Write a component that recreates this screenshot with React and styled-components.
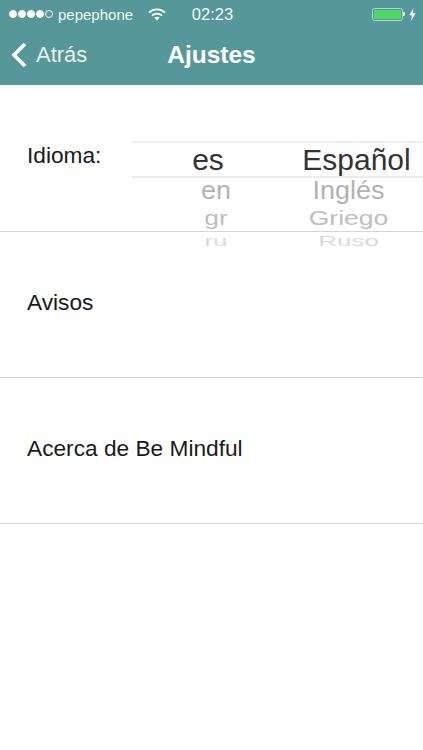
import React from 'react';
import styled, {createGlobalStyle} from 'styled-components';

const GlobalStyle = createGlobalStyle`
  html, body {
    margin: 0;
    padding: 0;
    background: #fff;
    font-family: "Liberation Sans", Arial, sans-serif;
  }
`

const Screen = styled.div`
  width: 423px;
  height: 750px;
  overflow: hidden;
  background: #fff;
`

const Header = styled.header`
  height: 85px;
  background: #569899;
  color: #fff;
  display: flex;
  flex-direction: column;
`

const StatusBar = styled.div`
  height: 28px;
  padding: 0 7px 0 9px;
  display: flex;
  align-items: center;
  font-size: 15px;
  color: #eef5f5;
`

const StatusLeft = styled.div`
  flex: 1;
  display: flex;
  align-items: center;
`

const Signal = styled.span`
  width: 8px;
  height: 8px;
  margin-right: 1px;
  border-radius: 50%;
  box-sizing: border-box;
  border: 1px solid #fff;
  background: ${p => (p.$on ? '#fff' : 'transparent')};
`

const Carrier = styled.span`
  margin-left: 4px;
  margin-right: 15px;
`

const Clock = styled.div`
  width: 60px;
  text-align: center;
  font-size: 16.5px;
`

const StatusRight = styled.div`
  flex: 1;
  display: flex;
  align-items: center;
  justify-content: flex-end;
  gap: 4px;
`

const Battery = styled.div`
  width: 31px;
  height: 13px;
  box-sizing: border-box;
  padding: 1px;
  border: 1px solid #b7d2d2;
  border-radius: 2.5px;
  display: flex;
`

const BatteryFill = styled.div`
  flex: 1;
  border-radius: 1px;
  background: #4cd964;
`

const BatteryCap = styled.div`
  width: 2px;
  height: 4px;
  margin-left: -4px;
  background: #d8e8e8;
  border-radius: 0 1px 1px 0;
`

const NavBar = styled.nav`
  flex: 1;
  padding-bottom: 4px;
  display: grid;
  grid-template-columns: 1fr auto 1fr;
  align-items: center;
`

const Back = styled.div`
  padding-left: 11px;
  display: flex;
  align-items: center;
  gap: 9px;
  font-size: 22px;
  color: #e6f0f0;
`

const Title = styled.h1`
  margin: 0;
  font-size: 24.5px;
  font-weight: 700;
`

const Settings = styled.main`
  padding-top: 1px;
`

const SettingRow = styled.section`
  height: 146px;
  position: relative;
  box-sizing: border-box;
  padding-left: 27px;
  display: flex;
  align-items: ${p => (p.$top ? 'flex-start' : 'center')};
  padding-top: ${p => (p.$top ? '56px' : '0')};
  padding-bottom: ${p => (p.$top ? '0' : '5px')};
  border-bottom: 1px solid #d6d6d6;
  font-size: 22.7px;
  line-height: 26px;
  color: #1a1a1a;
`

const Picker = styled.div`
  position: absolute;
  top: 54px;
  left: 132px;
  right: 0;
`

const PickerRow = styled.div`
  height: ${p => p.$height}px;
  display: grid;
  grid-template-columns: 152px 1fr;
  grid-template-rows: 100%;
  align-items: center;
  box-sizing: border-box;
  color: ${p => p.$color};
  font-size: ${p => p.$size}px;
  line-height: 1;
  white-space: nowrap;
  ${p => p.$selected && 'border-top: 2px solid #ececec; border-bottom: 2px solid #ececec; margin-top: 1px;'}
`

const Cell = styled.span`
  text-align: center;
  transform: translateX(${p => p.$shift}px) scaleY(${p => p.$squash});
`

const rows = [
    {code: 'en', name: 'Inglés', size: 27, height: 25, color: '#b2b2b2', squash: 0.95},
    {code: 'gr', name: 'Griego', size: 26.5, height: 31, color: '#bebebe', squash: 0.78},
    {code: 'ru', name: 'Ruso', size: 26, height: 14, color: '#dcdcdc', squash: 0.55},
]

const App = () => {
    return (
        <Screen>
            <GlobalStyle/>
            <Header>
                <StatusBar>
                    <StatusLeft>
                        <Signal $on/><Signal $on/><Signal $on/><Signal $on/><Signal/>
                        <Carrier>pepephone</Carrier>
                        <svg width="18" height="13" viewBox="0 0 18 13">
                            <path d="M1 4.6C5.6.4 12.4.4 17 4.6" fill="none" stroke="#fff" strokeWidth="1.7"/>
                            <path d="M4 7.6c2.9-2.6 7.1-2.6 10 0" fill="none" stroke="#fff" strokeWidth="1.7"/>
                            <path d="M6.3 9.6c1.6-1.3 3.8-1.3 5.4 0L9 12.6z" fill="#fff"/>
                        </svg>
                    </StatusLeft>
                    <Clock>02:23</Clock>
                    <StatusRight>
                        <Battery><BatteryFill/></Battery>
                        <BatteryCap/>
                        <svg width="7" height="13" viewBox="0 0 7 13">
                            <path d="M4.4 0 .3 7.2h2.6L2 13l4.7-7.8H3.9z" fill="#f2f7f7"/>
                        </svg>
                    </StatusRight>
                </StatusBar>
                <NavBar>
                    <Back>
                        <svg width="16" height="26" viewBox="0 0 16 26">
                            <path d="M14 2 3 13l11 11" fill="none" stroke="#fff" strokeWidth="3.6"/>
                        </svg>
                        Atrás
                    </Back>
                    <Title>Ajustes</Title>
                    <span/>
                </NavBar>
            </Header>
            <Settings>
                <SettingRow $top>
                    Idioma:
                    <Picker>
                        <PickerRow $selected $height={37} $size={30} $color="#333">
                            <Cell $squash={1} $shift={0}>es</Cell>
                            <Cell $squash={1} $shift={3}>Español</Cell>
                        </PickerRow>
                        {rows.map(row => (
                            <PickerRow key={row.code} $height={row.height} $size={row.size} $color={row.color}>
                                <Cell $squash={row.squash} $shift={8}>{row.code}</Cell>
                                <Cell $squash={row.squash} $shift={-5}>{row.name}</Cell>
                            </PickerRow>
                        ))}
                    </Picker>
                </SettingRow>
                <SettingRow>Avisos</SettingRow>
                <SettingRow>Acerca de Be Mindful</SettingRow>
            </Settings>
        </Screen>
    );
};

export default App;
